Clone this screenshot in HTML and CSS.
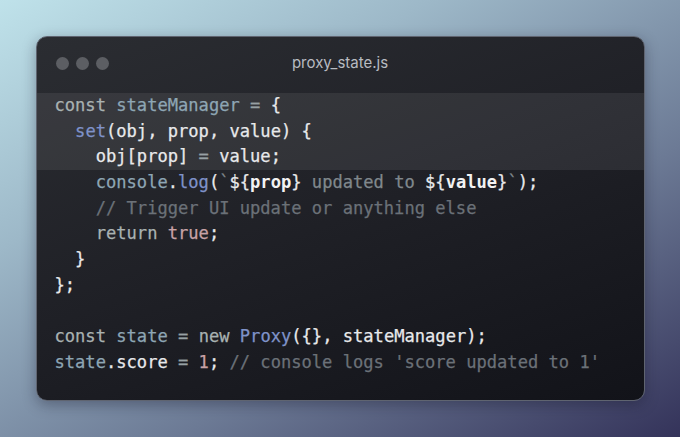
FILE: index.html
```html
<!DOCTYPE html>
<html>
<head>
<meta charset="utf-8">
<link rel="stylesheet" href="styles.css">
</head>
<body>
<div class="window">
  <div class="titlebar">
    <div class="dots"><span class="dot"></span><span class="dot"></span><span class="dot"></span></div>
    <div class="title">proxy_state.js</div>
  </div>
  <div class="code">
    <div class="hl">
<div class="line"><span class="kw">const</span> <span class="var">stateManager</span> <span class="op">=</span> <span class="p">{</span></div>
<div class="line">  <span class="fn">set</span><span class="p">(obj, prop, value) {</span></div>
<div class="line">    <span class="p">obj[prop]</span> <span class="op">=</span> <span class="p">value;</span></div>
    </div>
<div class="line">    <span class="var">console</span><span class="p">.</span><span class="fn">log</span><span class="p">(</span><span class="str">`</span><span class="p">${</span><span class="b">prop</span><span class="p">}</span><span class="str"> updated to </span><span class="p">${</span><span class="b">value</span><span class="p">}</span><span class="str">`</span><span class="p">);</span></div>
<div class="line">    <span class="cm">// Trigger UI update or anything else</span></div>
<div class="line">    <span class="kw">return</span> <span class="num">true</span><span class="p">;</span></div>
<div class="line">  <span class="p">}</span></div>
<div class="line"><span class="p">};</span></div>
<div class="line"> </div>
<div class="line"><span class="kw">const</span> <span class="var">state</span> <span class="op">=</span> <span class="kw">new</span> <span class="fn">Proxy</span><span class="p">({}, stateManager);</span></div>
<div class="line"><span class="var">state</span><span class="p">.score</span> <span class="op">=</span> <span class="num">1</span><span class="p">;</span> <span class="cm">// console logs 'score updated to 1'</span></div>
  </div>
</div>
</body>
</html>
```

FILE: styles.css
```css
html, body {
  margin: 0;
  padding: 0;
}
body {
  width: 680px;
  height: 437px;
  display: flex;
  align-items: center;
  justify-content: center;
  background: linear-gradient(150deg, #bfe2ea 0%, #9db8c8 30%, #6c7a95 65%, #34335a 100%);
  overflow: hidden;
}
.window {
  width: 609px;
  height: 365px;
  box-sizing: border-box;
  border-radius: 11px;
  border: 1px solid #5f6470;
  background: linear-gradient(160deg, #2b2d32 0%, #1f2026 50%, #121319 100%);
  box-shadow: 0 4px 14px rgba(20, 20, 40, 0.35);
  overflow: hidden;
  display: flex;
  flex-direction: column;
}
.titlebar {
  height: 56px;
  flex: none;
  display: flex;
  align-items: center;
  padding: 0 19px;
  position: relative;
}
.dots {
  display: flex;
  gap: 7px;
  margin-top: -4px;
}
.dot {
  width: 13px;
  height: 13px;
  border-radius: 50%;
  background: #5c5e63;
}
.title {
  position: absolute;
  left: 0;
  right: 0;
  top: 16px;
  text-align: center;
  font-family: Inter, "Noto Sans", sans-serif;
  font-size: 15px;
  color: #b8bbc1;
}
.code {
  font-family: "DejaVu Sans Mono", monospace;
  font-size: 17.1px;
  line-height: 25.7px;
  color: #e6e7e9;
}
.hl {
  background: rgba(255, 255, 255, 0.075);
}
.line {
  padding-left: 18px;
  height: 25.7px;
  white-space: pre;
  -webkit-text-stroke: 0.25px currentColor;
}
.kw { color: #a9b2b2; }
.op { color: #98a1a4; }
.var { color: #8ea6b4; }
.fn { color: #7f92c9; }
.p { color: #e8e9eb; }
.b { color: #f2f2f2; font-weight: bold; -webkit-text-stroke: 0; }
.str { color: #80888d; }
.cm { color: #6b7178; }
.num { color: #c8a2a6; }
```
